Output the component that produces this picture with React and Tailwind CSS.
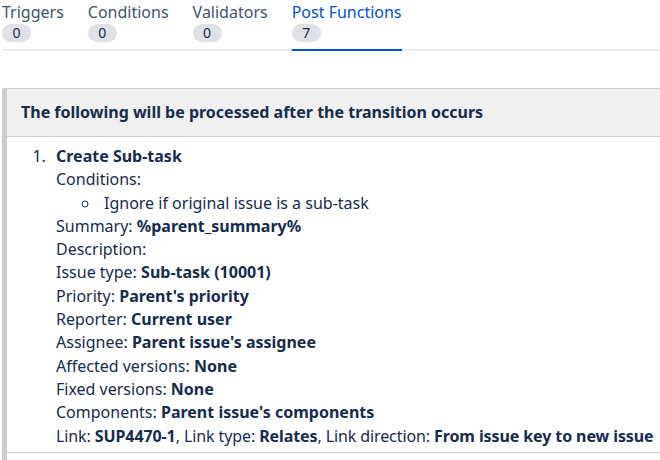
export default function App() {
  const tabs = [
    { name: "Triggers", count: 0 },
    { name: "Conditions", count: 0 },
    { name: "Validators", count: 0 },
    { name: "Post Functions", count: 7, active: true },
  ];
  const rows = [
    ["Summary: ", "%parent_summary%"],
    ["Description:", ""],
    ["Issue type: ", "Sub-task (10001)"],
    ["Priority: ", "Parent's priority"],
    ["Reporter: ", "Current user"],
    ["Assignee: ", "Parent issue's assignee"],
    ["Affected versions: ", "None"],
    ["Fixed versions: ", "None"],
    ["Components: ", "Parent issue's components"],
  ];
  return (
    <div
      className="w-[660px] h-[460px] overflow-hidden bg-white text-[#172b4d] text-[16px] leading-[23.3px]"
      style={{ fontFamily: '"Noto Sans", "Open Sans", sans-serif' }}
    >
      <div className="ml-[2px] flex border-b-2 border-[#ebecf0] h-[51px]">
        {tabs.map((t) => (
          <div
            key={t.name}
            className={`mr-[24px] flex flex-col pt-[1px] ${t.active ? "border-b-2 border-[#0052cc] -mb-[2px] text-[#0052cc]" : "text-[#42526e]"}`}
          >
            <span className="leading-[22px] whitespace-nowrap">{t.name}</span>
            <span className="mt-[1px] w-[29px] h-[18px] rounded-full bg-[#dfe1e6] text-[#172b4d] text-[14px] leading-[18px] text-center">
              {t.count}
            </span>
          </div>
        ))}
      </div>
      <div className="mt-[37px] ml-[2px] border-l-[5px] border-t border-[#cccccc] h-[400px]">
        <div className="h-[48px] bg-[#f0f0f0] border-b border-[#cccccc] flex items-center pl-[14px] font-bold">
          The following will be processed after the transition occurs
        </div>
        <ol className="list-decimal pl-[43px] pt-[8px] border-b border-[#cccccc] pb-[4px] w-[653px] whitespace-nowrap">
          <li className="pl-[6px]">
            <div className="font-bold">Create Sub-task</div>
            <div>Conditions:</div>
            <ul className="list-[circle] pl-[44px]">
              <li className="pl-[4px]">Ignore if original issue is a sub-task</li>
            </ul>
            {rows.map(([k, v]) => (
              <div key={k}>
                {k}
                {v && <span className="font-bold">{v}</span>}
              </div>
            ))}
            <div className="tracking-[-0.1px]">
              Link: <span className="font-bold">SUP4470-1</span>, Link type:{" "}
              <span className="font-bold">Relates</span>, Link direction:{" "}
              <span className="font-bold">From issue key to new issue</span>
            </div>
          </li>
        </ol>
      </div>
    </div>
  );
}
